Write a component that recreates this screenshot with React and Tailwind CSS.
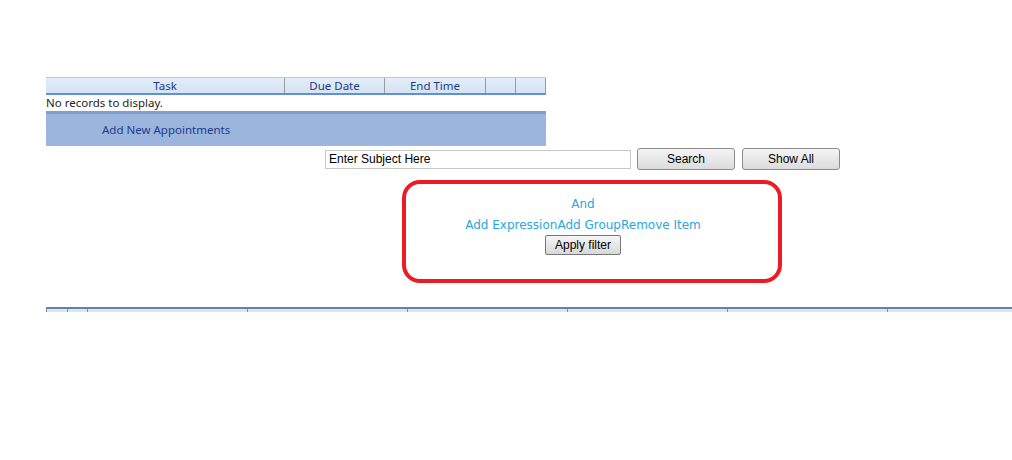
import React from 'react';

const headerCols = [
  { label: 'Task', w: 'w-[238px]' },
  { label: 'Due Date', w: 'w-[100px]' },
  { label: 'End Time', w: 'w-[101px]' },
  { label: '', w: 'w-[30px]' },
  { label: '', w: 'flex-1' },
];

const gridCols = ['w-[21px]', 'w-[20px]', 'w-[160px]', 'w-[160px]', 'w-[160px]', 'w-[160px]', 'w-[160px]', 'flex-1'];

export default function App() {
  return (
    <div className="min-h-[460px] bg-white pt-[77px] text-[11.5px]" style={{ fontFamily: '"Noto Sans", "Open Sans", sans-serif' }}>
      {/* Appointments grid */}
      <div className="ml-[46px] w-[500px]">
        <div className="flex h-[18px] border-t border-[#b9c9dd] border-b-2 border-b-[#5f8fd6] bg-gradient-to-b from-[#e4edf8] to-[#d5e3f4] text-[#1a3a8c]">
          {headerCols.map((c, i) => (
            <div
              key={i}
              className={`${c.w} flex items-center justify-center leading-none ${i > 0 ? 'border-l border-[#9a9a9a]' : ''} ${i === headerCols.length - 1 ? 'border-r border-[#9a9a9a]' : ''}`}
            >
              {c.label}
            </div>
          ))}
        </div>
        <div className="h-[16px] leading-[16px] text-[#222]">No records to display.</div>
        <div className="h-[35px] border-t-[3px] border-[#7f9fd0] bg-[#9bb5dc] pl-[56px] flex items-center text-[#1e3a8f]">
          Add New Appointments
        </div>
      </div>

      {/* Search row */}
      <div className="ml-[325px] mt-[2px] flex items-center" style={{ fontFamily: '"Liberation Sans", Arial, sans-serif' }}>
        <input
          readOnly
          value="Enter Subject Here"
          className="h-[19px] w-[306px] border border-[#c8c8c8] px-[3px] text-[12px] text-black outline-none"
        />
        <button className="ml-[6px] h-[22px] w-[98px] rounded-[3px] border border-[#8a8a8a] bg-gradient-to-b from-[#f4f4f4] to-[#dcdcdc] text-[12px] text-black">
          Search
        </button>
        <button className="ml-[7px] h-[22px] w-[98px] rounded-[3px] border border-[#8a8a8a] bg-gradient-to-b from-[#f4f4f4] to-[#dcdcdc] text-[12px] text-black">
          Show All
        </button>
      </div>

      {/* Filter box */}
      <div className="ml-[402px] mt-[10px] flex h-[103px] w-[380px] flex-col items-center rounded-[18px] border-[4px] border-[#ec1c24] pt-[11px] pr-[18px]">
        <div className="text-[12px] leading-[18px] text-[#2aa6dd]" style={{ fontFamily: '"DejaVu Sans", Verdana, sans-serif' }}>
          And
        </div>
        <div className="mt-[3px] text-[12px] leading-[18px] text-[#2aa6dd]" style={{ fontFamily: '"DejaVu Sans", Verdana, sans-serif' }}>
          Add ExpressionAdd GroupRemove Item
        </div>
        <button
          className="mt-[1px] h-[20px] w-[76px] rounded-[2px] border border-[#777] bg-gradient-to-b from-[#f6f6f6] to-[#d8d8d8] text-[12px] leading-none text-black"
          style={{ fontFamily: '"Liberation Sans", Arial, sans-serif' }}
        >
          Apply filter
        </button>
      </div>

      {/* Empty grid header */}
      <div className="ml-[46px] mt-[24px] flex h-[5px] border-t-2 border-[#5d87aa] bg-[#dbe6f3]">
        {gridCols.map((w, i) => (
          <div key={i} className={`${w} h-full border-l border-[#8d8d8d]`} />
        ))}
      </div>
    </div>
  );
}
